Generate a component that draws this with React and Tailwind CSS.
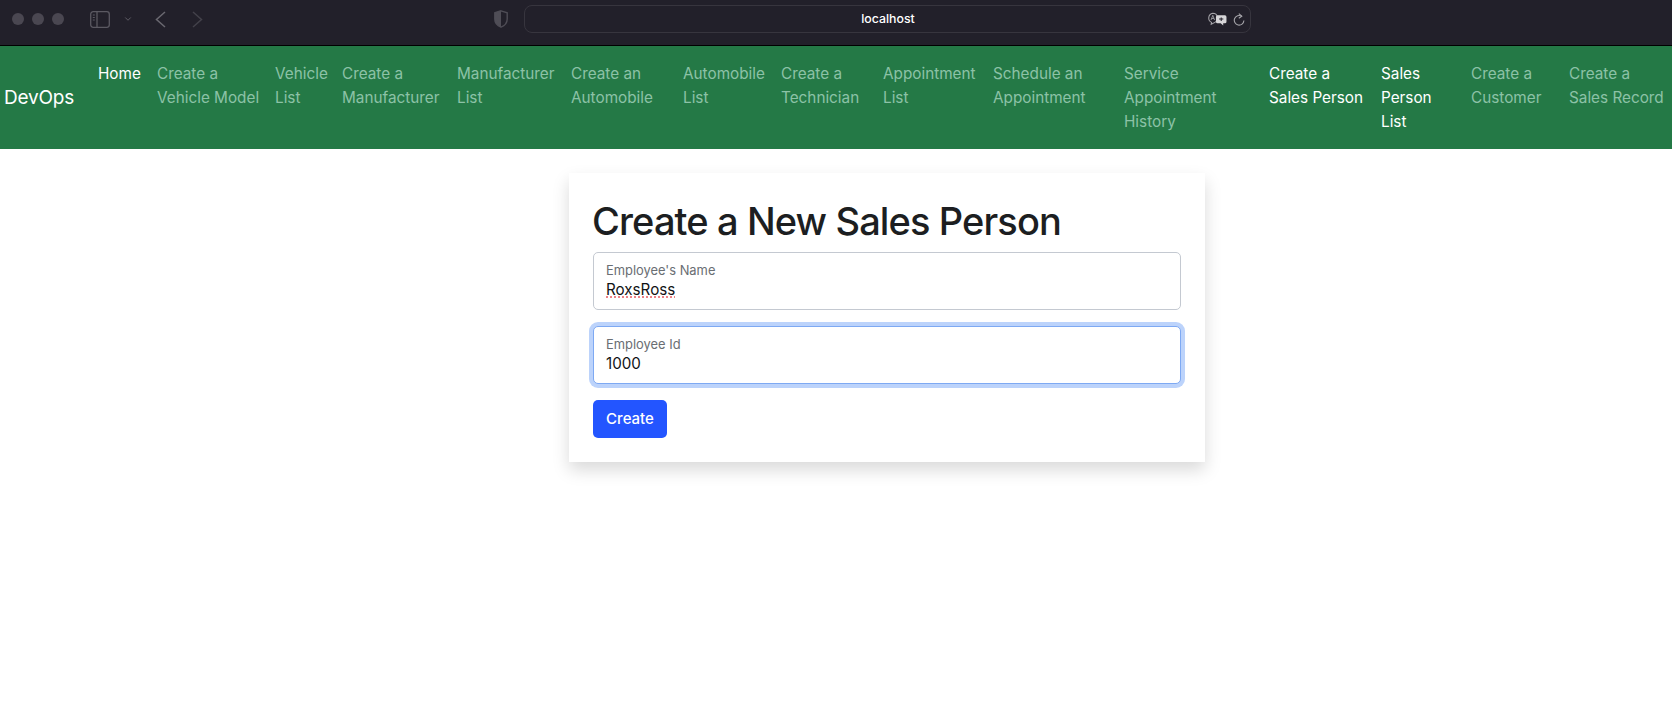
import React from 'react';
import { ChevronDown } from 'lucide-react';

const links = [
  { lines: ['Home'], width: 'w-[59px]', active: true },
  { lines: ['Create a', 'Vehicle Model'], width: 'w-[118px]' },
  { lines: ['Vehicle', 'List'], width: 'w-[67px]' },
  { lines: ['Create a', 'Manufacturer'], width: 'w-[115px]' },
  { lines: ['Manufacturer', 'List'], width: 'w-[114px]' },
  { lines: ['Create an', 'Automobile'], width: 'w-[112px]' },
  { lines: ['Automobile', 'List'], width: 'w-[98px]' },
  { lines: ['Create a', 'Technician'], width: 'w-[102px]' },
  { lines: ['Appointment', 'List'], width: 'w-[110px]' },
  { lines: ['Schedule an', 'Appointment'], width: 'w-[131px]' },
  { lines: ['Service', 'Appointment', 'History'], width: 'w-[145px]' },
  { lines: ['Create a', 'Sales Person'], width: 'w-[112px]', active: true },
  { lines: ['Sales', 'Person', 'List'], width: 'w-[90px]', active: true },
  { lines: ['Create a', 'Customer'], width: 'w-[98px]' },
  { lines: ['Create a', 'Sales Record'], width: 'w-[102px]' },
];

const BrowserBar = () => (
  <div className="h-[46px] pb-[7px] bg-[#22202a] border-b border-black flex items-center shrink-0">
    <div className="flex gap-2 pl-3 w-[90px]">
      <span className="w-3 h-3 rounded-full bg-[#4a4751]" />
      <span className="w-3 h-3 rounded-full bg-[#4a4751]" />
      <span className="w-3 h-3 rounded-full bg-[#4a4751]" />
    </div>
    <svg width="20" height="17" viewBox="0 0 20 17" fill="none" stroke="#5b5962" strokeWidth="1.3">
      <rect x="0.7" y="0.7" width="18.6" height="15.6" rx="2.5" />
      <path d="M7 1v15" />
      <path d="M2.8 4h2M2.8 6.5h2M2.8 9h2" strokeWidth="1" />
    </svg>
    <ChevronDown size={10} strokeWidth={2} className="text-[#6a6870] ml-[13px]" />
    <svg width="11" height="17" viewBox="0 0 11 17" fill="none" stroke="#6a6870" strokeWidth="1.5" className="ml-[22px]">
      <path d="M10 1 L1.500 8.500 L10 16" />
    </svg>
    <svg width="11" height="17" viewBox="0 0 11 17" fill="none" stroke="#43414a" strokeWidth="1.5" className="ml-[26px]">
      <path d="M1 1 L9.500 8.500 L1 16" />
    </svg>
    <svg width="14" height="18" viewBox="0 0 14 18" className="ml-[291px]">
      <path d="M7 0.8 L13.2 2.8 V9 C13.2 13 10.5 15.8 7 17.2 C3.5 15.8 0.8 13 0.8 9 V2.8 Z" fill="none" stroke="#4f4d56" strokeWidth="1.4" />
      <path d="M7 0.8 L0.8 2.8 V9 C0.8 13 3.5 15.8 7 17.2 Z" fill="#4f4d56" />
    </svg>
    <div className="ml-4 w-[727px] h-7 rounded-lg border border-[#37353e] flex items-center">
      <span className="flex-1 text-center text-white text-[12.300px] font-medium pl-[44px]">localhost</span>
      <svg width="20" height="14" viewBox="0 0 19 13" className="mr-[6px]">
        <path d="M5.500 1a4.600 4.600 0 0 1 2 8.700L4 11.500l.3-1.800A4.600 4.600 0 0 1 5.500 1z" fill="none" stroke="#a5a4a9" strokeWidth="1" />
        <path d="M3.800 7.500l1.700-4.500 1.700 4.500M4.400 6h2.200" fill="none" stroke="#a5a4a9" strokeWidth="0.8" />
        <path d="M10 3h7a1.500 1.500 0 0 1 1.500 1.500v4.500A1.500 1.500 0 0 1 17 10.500h-1.600V12.700L13 10.500h-3A1.500 1.500 0 0 1 8.500 9V4.500A1.500 1.500 0 0 1 10 3z" fill="#d6d5d8" />
        <path d="M11.500 6.500h4M13.500 5v3.500" stroke="#22202a" strokeWidth="1" />
      </svg>
      <svg width="12" height="13" viewBox="0 0 12 13" fill="none" stroke="#a5a4a9" strokeWidth="1.100" className="mr-[5px]">
        <path d="M8.600 3.200A4.800 4.800 0 1 0 10.900 7.500" />
        <path d="M5.800 0.600 L8.800 3.200 L5.800 5.200" />
      </svg>
    </div>
  </div>
);

const Navbar = () => (
  <nav className="bg-[#247946] flex h-[103px] shrink-0">
    <a className="w-[90px] pl-1 self-center text-[19px] leading-[30px] tracking-[-0.2px] text-white shrink-0">DevOps</a>
    <ul className="flex items-start py-2">
      {links.map((link) => (
        <li key={link.lines.join(' ')} className={`${link.width} shrink-0`}>
          <a className={`block p-2 text-[15.300px] leading-[24px] whitespace-nowrap ${link.active ? 'text-white' : 'text-[#8cc2a6]'}`}>
            {link.lines.map((line) => (
              <span key={line} className="block">{line}</span>
            ))}
          </a>
        </li>
      ))}
    </ul>
  </nav>
);

const Field = ({ label, value, focused, misspelled }) => (
  <div
    className={`h-[58px] rounded-[5px] border bg-white px-3 pt-[8px] flex flex-col ${
      focused ? 'border-[#7ea9f3] ring-4 ring-[#bcd3fb]' : 'border-[#c4c9d1]'
    }`}
  >
    <label className="text-[12.900px] leading-[20px] text-[#6a6e73]">{label}</label>
    <span className="text-[15.200px] leading-[18px] text-[#111315]">
      <span className={misspelled ? 'underline decoration-dotted decoration-[#e8585f] underline-offset-2' : ''}>{value}</span>
    </span>
  </div>
);

const App = () => {
  return (
    <div className="min-h-[707px] bg-white flex flex-col font-['Inter',sans-serif]">
      <BrowserBar />
      <Navbar />
      <main className="pt-6 pl-[569px]">
        <div className="w-[636px] p-6 bg-white shadow-[0_8px_16px_rgba(0,0,0,0.15)]">
          <h1 className="text-[38px] leading-[48px] font-[550] tracking-[-0.88px] text-[#1c1e21] mb-[7px] -ml-px">Create a New Sales Person</h1>
          <form className="flex flex-col gap-4">
            <Field label="Employee's Name" value="RoxsRoss" misspelled />
            <Field label="Employee Id" value="1000" focused />
            <div>
              <button type="button" className="h-[38px] w-[74px] pt-[1px] rounded-[5px] bg-[#2355ff] text-white text-[15px] font-medium">
                Create
              </button>
            </div>
          </form>
        </div>
      </main>
    </div>
  );
};

export default App;
